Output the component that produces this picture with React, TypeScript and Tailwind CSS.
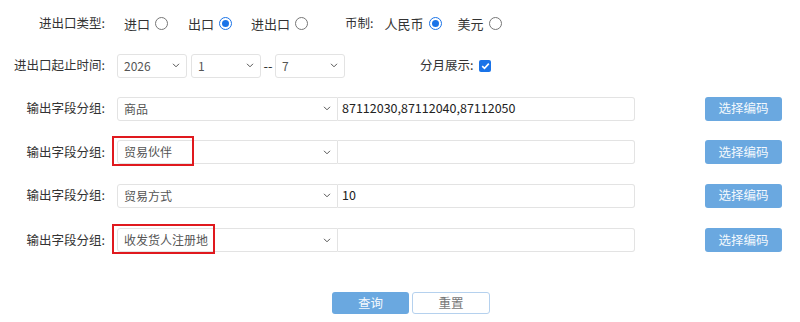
import React from 'react';

const font = { fontFamily: '"Noto Sans CJK SC", "Noto Sans", sans-serif' };

const Chevron = () => (
  <svg width="8" height="5" viewBox="0 0 8 5" className="shrink-0">
    <path d="M1 0.8 L4 3.8 L7 0.8" fill="none" stroke="#555" strokeWidth="1" />
  </svg>
);

interface FakeSelectProps {
  value: string;
  width: string;
  joined?: boolean;
}

const FakeSelect: React.FC<FakeSelectProps> = ({ value, width, joined }) => (
  <div
    className={`flex h-[24px] ${width} items-center justify-between border border-[#e3e3e3] bg-white pl-[6px] pr-[6px] text-[12px] text-[#555] ${
      joined ? 'rounded-l-[3px]' : 'rounded-[3px]'
    }`}
  >
    <span>{value}</span>
    <Chevron />
  </div>
);

const Radio = ({ checked }: { checked?: boolean }) =>
  checked ? (
    <span className="ml-[5px] inline-flex h-[13px] w-[13px] items-center justify-center rounded-full border-[1.5px] border-[#1a73e8] bg-white">
      <span className="h-[7px] w-[7px] rounded-full bg-[#1a73e8]" />
    </span>
  ) : (
    <span className="ml-[5px] inline-block h-[13px] w-[13px] rounded-full border border-[#767676] bg-white" />
  );

const Label = ({ children }: { children: React.ReactNode }) => (
  <div className="w-[105px] shrink-0 text-right text-[12.5px] text-[#333]">{children}</div>
);

interface FieldRowProps {
  group: string;
  codes: string;
  mark?: string;
  height: string;
}

const FieldRow: React.FC<FieldRowProps> = ({ group, codes, mark, height }) => (
  <div className={`flex ${height} items-center`}>
    <Label>输出字段分组:</Label>
    <div className="relative ml-[12px] flex">
      <FakeSelect value={group} width="w-[221px]" joined />
      <div className="flex h-[24px] w-[297px] items-center rounded-r-[3px] border border-l-0 border-[#e3e3e3] bg-white pl-[4px] text-[12.5px] text-[#222]">
        {codes}
      </div>
      {mark && (
        <div className={`pointer-events-none absolute -left-[5px] -top-[4px] h-[30px] ${mark} border-2 border-[#e0191e]`} />
      )}
    </div>
    <button className="ml-[70px] h-[24px] w-[77px] rounded-[3px] bg-[#6aa8e0] text-[12.5px] text-[#f3f8fd]">
      选择编码
    </button>
  </div>
);

export default function App() {
  return (
    <div className="h-[322px] w-[800px] bg-white" style={font}>
      <div className="flex h-[44px] items-center pt-[3px] text-[13px] text-[#333]">
        <Label>进出口类型:</Label>
        <div className="ml-[19px] flex items-center">
          <span>进口</span>
          <Radio />
          <span className="ml-[20px]">出口</span>
          <Radio checked />
          <span className="ml-[19px]">进出口</span>
          <Radio />
          <span className="ml-[37px] text-[12.5px]">币制:</span>
          <span className="ml-[11px]">人民币</span>
          <Radio checked />
          <span className="ml-[16px]">美元</span>
          <Radio />
        </div>
      </div>

      <div className="flex h-[43px] items-center text-[13px] text-[#333]">
        <Label>进出口起止时间:</Label>
        <div className="ml-[12px] flex items-center">
          <FakeSelect value="2026" width="w-[70px]" />
          <div className="ml-[4px]">
            <FakeSelect value="1" width="w-[70px]" />
          </div>
          <span className="w-[14px] text-center leading-none">--</span>
          <FakeSelect value="7" width="w-[70px]" />
          <span className="ml-[75px] text-[12.5px]">分月展示:</span>
          <span className="ml-[6px] inline-flex h-[12px] w-[12px] items-center justify-center rounded-[2px] bg-[#1a73e8]">
            <svg width="9" height="8" viewBox="0 0 9 8">
              <path d="M1.2 4.2 L3.5 6.4 L7.8 1.6" fill="none" stroke="#fff" strokeWidth="1.6" />
            </svg>
          </span>
        </div>
      </div>

      <FieldRow group="商品" codes="87112030,87112040,87112050" height="h-[43px]" />
      <FieldRow group="贸易伙伴" codes="" mark="w-[82px]" height="h-[44px]" />
      <FieldRow group="贸易方式" codes="10" height="h-[43px]" />
      <FieldRow group="收发货人注册地" codes="" mark="w-[103px]" height="h-[46px]" />

      <div className="mt-[29px] flex pl-[332px]">
        <button className="h-[22px] w-[77px] rounded-[3px] bg-[#6aa8e0] text-[12.5px] text-[#f3f8fd]">查询</button>
        <button className="ml-[3px] h-[22px] w-[78px] rounded-[3px] border border-[#b5d1ee] bg-white text-[12.5px] text-[#777]">
          重置
        </button>
      </div>
    </div>
  );
}
